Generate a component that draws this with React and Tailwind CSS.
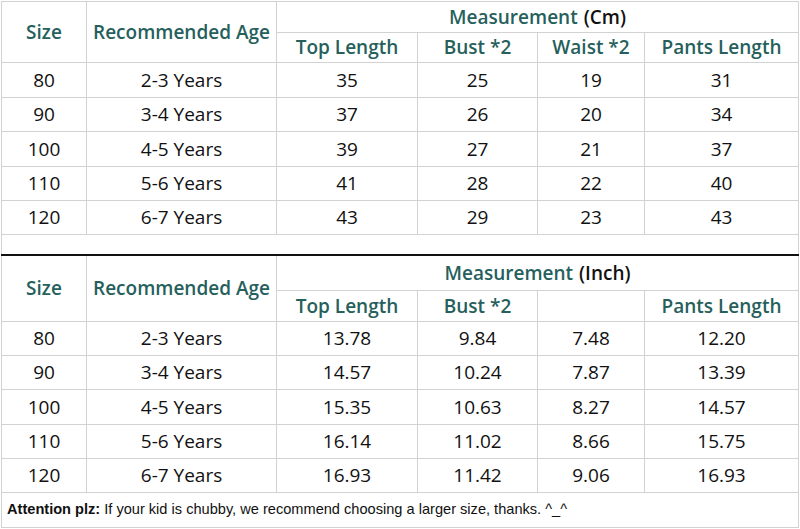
import React from "react";

const cm = [
  ["80", "2-3 Years", "35", "25", "19", "31"],
  ["90", "3-4 Years", "37", "26", "20", "34"],
  ["100", "4-5 Years", "39", "27", "21", "37"],
  ["110", "5-6 Years", "41", "28", "22", "40"],
  ["120", "6-7 Years", "43", "29", "23", "43"],
];
const inch = [
  ["80", "2-3 Years", "13.78", "9.84", "7.48", "12.20"],
  ["90", "3-4 Years", "14.57", "10.24", "7.87", "13.39"],
  ["100", "4-5 Years", "15.35", "10.63", "8.27", "14.57"],
  ["110", "5-6 Years", "16.14", "11.02", "8.66", "15.75"],
  ["120", "6-7 Years", "16.93", "11.42", "9.06", "16.93"],
];

const cell = "border-r border-b border-[#d2d2d2] flex items-center justify-center text-[19px] leading-none";
const head = "text-[#265f5c] font-semibold";

function Table({ unit, rows, waist, rowsClass }) {
  return (
    <div className={`grid grid-cols-[85px_190px_141px_120px_107px_154px] ${rowsClass} border-l border-[#d2d2d2] w-[798px]`}>
      <div className={`${cell} ${head} row-span-2`}>Size</div>
      <div className={`${cell} ${head} row-span-2`}>Recommended Age</div>
      <div className={`${cell} col-span-4 font-semibold gap-[6px]`}>
        <span className="text-[#265f5c]">Measurement</span>
        <span className="text-[#111]">({unit})</span>
      </div>
      <div className={`${cell} ${head}`}>Top Length</div>
      <div className={`${cell} ${head}`}>Bust *2</div>
      <div className={`${cell} ${head}`}>{waist ? "Waist *2" : ""}</div>
      <div className={`${cell} ${head}`}>Pants Length</div>
      {rows.map((r, i) =>
        r.map((v, j) => (
          <div key={i + "-" + j} className={`${cell} text-[#111]`}>{v}</div>
        ))
      )}
    </div>
  );
}

export default function App() {
  return (
    <div className="w-[800px] h-[529px] bg-white pt-[1px] pl-[1px] overflow-hidden [font-family:'Open_Sans','Noto_Sans',sans-serif]">
      <div className="border-t border-[#d2d2d2] w-[798px]">
        <Table
          unit="Cm"
          rows={cm}
          waist
          rowsClass="grid-rows-[31px_30px_35px_34px_35px_34px_34px]"
        />
      </div>
      <div className="w-[798px] h-[19px] border-x border-[#d2d2d2]" />
      <div className="w-[798px] h-[2px] bg-[#111]" />
      <Table
        unit="Inch"
        rows={inch}
        waist={false}
        rowsClass="grid-rows-[35px_31px_34px_34px_35px_34px_34px]"
      />
      <div className="w-[798px] h-[35px] border-x border-b border-[#d2d2d2] flex items-center pl-[5px] text-[14.6px] text-[#111] [font-family:'Liberation_Sans',Arial,sans-serif]">
        <span className="font-bold mr-[4px]">Attention plz:</span>
        <span>If your kid is chubby, we recommend choosing a larger size, thanks. ^_^</span>
      </div>
    </div>
  );
}
